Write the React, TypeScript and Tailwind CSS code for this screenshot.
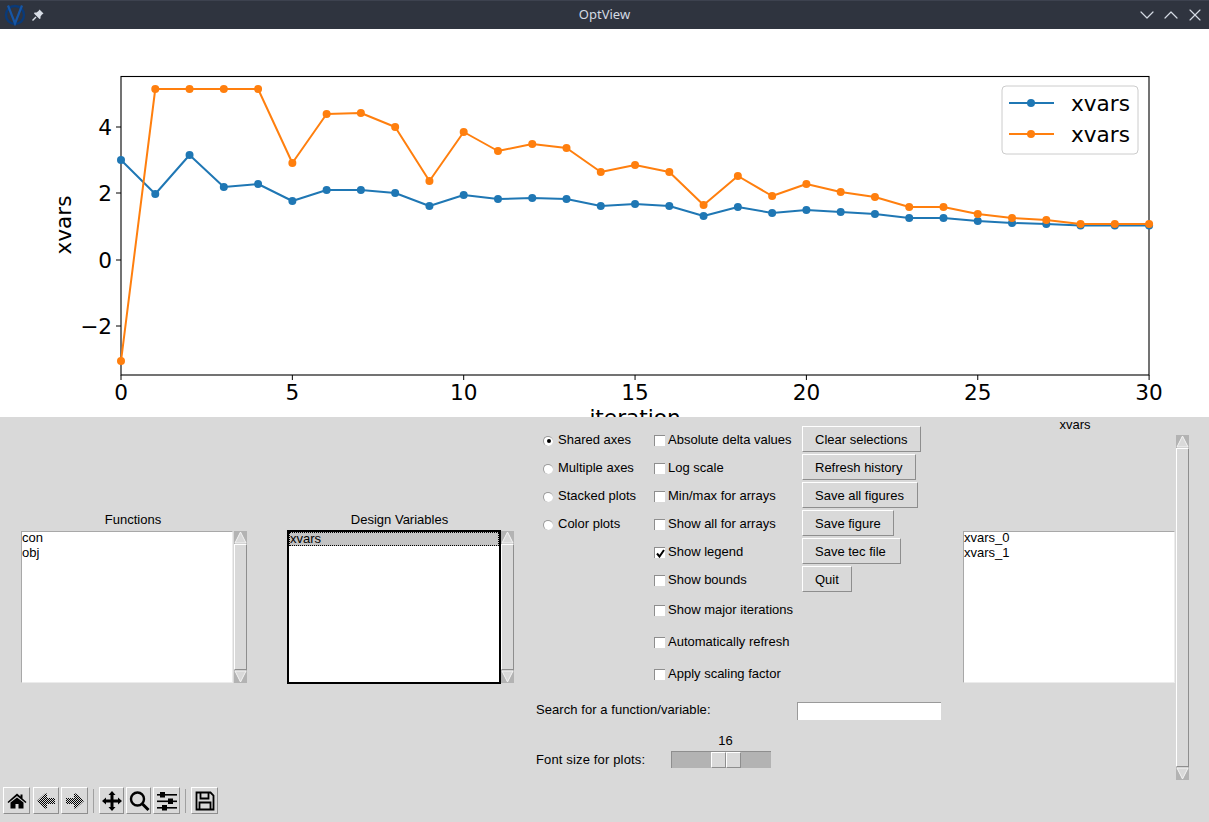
import { ChevronDown, ChevronUp, X } from "lucide-react";

const blue = [160, 194, 155, 187, 184, 201, 190, 190, 193, 206, 195, 199, 198, 199, 206, 204, 206, 216, 207, 213, 210, 212, 214, 218, 218, 221, 223, 224, 225.5, 225.5, 225.5];
const orange = [361, 89, 89, 89, 89, 163, 114, 113, 127, 181, 132, 151, 144, 148, 172, 165, 172, 205, 176, 196, 184, 192, 197, 207, 207, 214, 218, 220, 224, 224, 224];

const px = (i: number) => 121 + i * 34.27;

function Series({ ys, color }: { ys: number[]; color: string }) {
  return (
    <g>
      <polyline points={ys.map((y, i) => `${px(i)},${y}`).join(" ")} fill="none" stroke={color} strokeWidth="2" strokeLinejoin="round" />
      {ys.map((y, i) => (
        <circle key={i} cx={px(i)} cy={y} r="4" fill={color} />
      ))}
    </g>
  );
}

function Chart() {
  const xTicks = [0, 5, 10, 15, 20, 25, 30];
  const yTicks = [
    { label: "4", y: 127 },
    { label: "2", y: 193 },
    { label: "0", y: 260 },
    { label: "−2", y: 326 },
  ];
  return (
    <svg width="1209" height="388" viewBox="0 29 1209 388" className="block" fontFamily="'DejaVu Sans', sans-serif" fontSize="21.6" fill="#000">
      <rect x="121" y="76.5" width="1028" height="298.5" fill="none" stroke="#000" strokeWidth="1.1" />
      <Series ys={blue} color="#1f77b4" />
      <Series ys={orange} color="#ff7f0e" />
      {xTicks.map((t) => (
        <g key={t}>
          <line x1={px(t)} x2={px(t)} y1="375" y2="380" stroke="#000" />
          <text x={px(t)} y="400" textAnchor="middle">{t}</text>
        </g>
      ))}
      {yTicks.map((t) => (
        <g key={t.label}>
          <line x1="116" x2="121" y1={t.y} y2={t.y} stroke="#000" />
          <text x="112" y={t.y + 8} textAnchor="end">{t.label}</text>
        </g>
      ))}
      <text x="635" y="425" textAnchor="middle">iteration</text>
      <text transform="translate(71 225) rotate(-90)" textAnchor="middle">xvars</text>

      <rect x="1002" y="86" width="136" height="68" rx="4" fill="#fff" fillOpacity="0.8" stroke="#ccc" />
      <line x1="1009" x2="1054" y1="103" y2="103" stroke="#1f77b4" strokeWidth="2" />
      <circle cx="1031" cy="103" r="4" fill="#1f77b4" />
      <line x1="1009" x2="1054" y1="134" y2="134" stroke="#ff7f0e" strokeWidth="2" />
      <circle cx="1031" cy="134" r="4" fill="#ff7f0e" />
      <text x="1071" y="111">xvars</text>
      <text x="1071" y="142">xvars</text>
    </svg>
  );
}

function TitleBar() {
  return (
    <div className="flex h-[29px] items-center border-t border-[#3d424f] bg-[#2f343f] pl-1 pr-[4px] text-[#d3dae3]">
      <div className="flex flex-1 items-center">
        <svg width="22" height="22" viewBox="0 0 22 22" fill="none">
          <circle cx="11" cy="11" r="9" stroke="#0a3a78" strokeWidth="2.4" />
          <path d="M4 1.5 L11 19.5 L18 1.5" stroke="#1656a6" strokeWidth="2.2" />
        </svg>
        <svg width="14" height="14" viewBox="0 0 14 14" className="ml-[5px]" fill="#d8dde6">
          <path d="M8.5 1.5 L12.5 5.5 L11 6.5 L9.5 8.5 L9.5 10.5 L8.5 11 L3 5.5 L3.5 4.5 L5.5 4.5 L7.5 3 Z" />
          <path d="M5 9 L1.5 12.5" stroke="#d8dde6" strokeWidth="1.4" />
        </svg>
      </div>
      <div className="font-['Noto_Sans',sans-serif] text-[13px]">OptView</div>
      <div className="flex flex-1 items-center justify-end">
        <ChevronDown size={24} strokeWidth={1.2} />
        <ChevronUp size={24} strokeWidth={1.2} />
        <X size={20} strokeWidth={1.4} className="ml-[2px]" />
      </div>
    </div>
  );
}

function ScrollArrow({ up }: { up?: boolean }) {
  return (
    <svg width="13" height="13" viewBox="0 0 13 13" className="block shrink-0">
      <rect width="13" height="13" fill="#b3b3b3" />
      <path d={up ? "M6.5 1 L12 12 L1 12 Z" : "M1 1 L12 1 L6.5 12 Z"} fill="#d9d9d9" stroke="#f4f4f4" strokeWidth="1" />
    </svg>
  );
}

function ScrollBar({ className }: { className: string }) {
  return (
    <div className={`flex w-[13px] shrink-0 flex-col ${className}`}>
      <ScrollArrow up />
      <div className="flex-1 border border-r-[#8e8e8e] border-b-[#8e8e8e] border-t-white border-l-white bg-[#d9d9d9]" />
      <ScrollArrow />
    </div>
  );
}

function ListBox({ items, focused }: { items: string[]; focused?: boolean }) {
  return (
    <div className={`flex-1 bg-white ${focused ? "-mt-px h-[154px] border-2 border-black" : "h-[152px] border border-t-[#a8a8a8] border-l-[#a8a8a8] border-r-[#ececec] border-b-[#ececec]"}`}>
      {items.map((item) => (
        <div key={item} className={focused ? "h-[14px] border border-dotted border-black bg-[#c3c3c3] leading-[11px]" : "h-[15px] leading-[11px]"}>
          {item}
        </div>
      ))}
    </div>
  );
}

function Radio({ label, checked }: { label: string; checked?: boolean }) {
  return (
    <div className="flex h-[28px] items-center pl-[7px]">
      <span className="mt-[3px] flex h-[10px] w-[10px] items-center justify-center rounded-full border-t border-l border-[#9a9a9a] bg-white">
        {checked && <span className="h-[4px] w-[4px] rounded-full bg-black" />}
      </span>
      <span className="ml-[5px]">{label}</span>
    </div>
  );
}

function Check({ label, checked, h }: { label: string; checked?: boolean; h: string }) {
  return (
    <div className={`flex items-center ${h}`}>
      <span className="mt-[3px] flex h-[11px] w-[11px] shrink-0 items-center justify-center border-t border-l border-[#8e8e8e] bg-white">
        {checked && (
          <svg width="9" height="9" viewBox="0 0 9 9">
            <path d="M1 4.5 L3.5 7.5 L8 1" fill="none" stroke="#000" strokeWidth="2" />
          </svg>
        )}
      </span>
      <span className="ml-[3px] whitespace-nowrap">{label}</span>
    </div>
  );
}

function TkButton({ label, width }: { label: string; width: string }) {
  return (
    <div className="h-[28px]">
      <div className={`flex h-[26px] items-center border border-t-white border-l-white border-r-[#8e8e8e] border-b-[#8e8e8e] pl-[12px] ${width}`}>
        {label}
      </div>
    </div>
  );
}

function ToolButton({ children, className }: { children: React.ReactNode; className: string }) {
  return (
    <div className={`flex h-[27px] items-center justify-center border border-t-white border-l-white border-r-[#8e8e8e] border-b-[#8e8e8e] ${className}`}>
      {children}
    </div>
  );
}

function Toolbar() {
  return (
    <div className="flex items-center pl-[3px]">
      <ToolButton className="w-[27px]">
        <svg width="20" height="20" viewBox="0 0 20 20">
          <path d="M10 2.5 L13.5 5.5 V3.5 H15.5 V7.5 L19.5 11 L18.5 12 L10 5 L1.5 12 L0.5 11 Z" fill="#000" />
          <path d="M3.5 11.5 L10 6.5 L16.5 11.5 V17.5 H11.5 V13 H8.5 V17.5 H3.5 Z" fill="#000" />
        </svg>
      </ToolButton>
      <ToolButton className="ml-[3px] w-[26px]">
        <svg width="20" height="20" viewBox="0 0 20 20">
          <defs>
            <pattern id="dither" width="2" height="2" patternUnits="userSpaceOnUse">
              <rect width="2" height="2" fill="#d9d9d9" />
              <rect width="1" height="1" fill="#000" />
              <rect x="1" y="1" width="1" height="1" fill="#000" />
            </pattern>
          </defs>
          <path d="M1 10 L9 2.5 L11 2.5 L11 7 L19 7 L19 13 L11 13 L11 17.5 L9 17.5 Z" fill="url(#dither)" />
        </svg>
      </ToolButton>
      <ToolButton className="ml-[2px] w-[27px]">
        <svg width="20" height="20" viewBox="0 0 20 20">
          <path d="M19 10 L11 2.5 L9 2.5 L9 7 L1 7 L1 13 L9 13 L9 17.5 L11 17.5 Z" fill="url(#dither)" />
        </svg>
      </ToolButton>
      <div className="ml-[5px] h-[24px] w-px bg-[#a0a0a0]" />
      <ToolButton className="ml-[5px] w-[25px]">
        <svg width="22" height="22" viewBox="0 0 22 22">
          <path d="M11 1 L14.5 5 H12.5 V9.5 H17 V7.5 L21 11 L17 14.5 V12.5 H12.5 V17 H14.5 L11 21 L7.5 17 H9.5 V12.5 H5 V14.5 L1 11 L5 7.5 V9.5 H9.5 V5 H7.5 Z" fill="#000" />
        </svg>
      </ToolButton>
      <ToolButton className="ml-[2px] w-[25px]">
        <svg width="22" height="22" viewBox="0 0 22 22" fill="none" stroke="#000">
          <circle cx="9.5" cy="9" r="6.5" strokeWidth="2.4" />
          <path d="M14.5 14 L20.5 20" strokeWidth="3" />
        </svg>
      </ToolButton>
      <ToolButton className="ml-[2px] w-[27px]">
        <svg width="20" height="20" viewBox="0 0 20 20" fill="#000">
          <rect x="0" y="3" width="20" height="1.6" />
          <rect x="3" y="1" width="5" height="5.5" />
          <rect x="0" y="9.5" width="20" height="1.6" />
          <rect x="11" y="7.5" width="5" height="5.5" />
          <rect x="0" y="16" width="20" height="1.6" />
          <rect x="5" y="14" width="5" height="5.5" />
        </svg>
      </ToolButton>
      <div className="ml-[5px] h-[24px] w-px bg-[#a0a0a0]" />
      <ToolButton className="ml-[5px] w-[27px]">
        <svg width="20" height="20" viewBox="0 0 20 20" fill="none" stroke="#000" strokeWidth="1.8">
          <path d="M1.5 1.5 H15.5 L18.5 4.5 V18.5 H1.5 Z" />
          <path d="M5.5 1.5 V7.5 H13.5 V1.5" />
          <path d="M4.5 18.5 V11.5 H15.5 V18.5" />
        </svg>
      </ToolButton>
    </div>
  );
}

export default function App() {
  return (
    <div className="flex h-[822px] w-[1209px] flex-col overflow-hidden bg-white font-['Liberation_Sans',Arial,sans-serif] text-[13px] text-black">
      <TitleBar />
      <div className="h-[388px] overflow-hidden">
        <Chart />
      </div>
      <div className="flex h-[405px] flex-col bg-[#d9d9d9]">
        <div className="flex h-[370px] items-start leading-[15px]">
          <div className="ml-[21px] mt-[95px] w-[226px] shrink-0">
            <div className="h-[19px] pr-[2px] text-center">Functions</div>
            <div className="flex gap-px">
              <ListBox items={["con", "obj"]} />
              <ScrollBar className="h-[152px]" />
            </div>
          </div>
          <div className="ml-[40px] mt-[95px] w-[227px] shrink-0">
            <div className="h-[19px] pr-[2px] text-center">Design Variables</div>
            <div className="flex">
              <ListBox items={["xvars"]} focused />
              <ScrollBar className="h-[152px]" />
            </div>
          </div>

          <div className="ml-[22px] mt-[8px] w-[405px]">
            <div className="flex">
              <div className="w-[118px]">
                <Radio label="Shared axes" checked />
                <Radio label="Multiple axes" />
                <Radio label="Stacked plots" />
                <Radio label="Color plots" />
              </div>
              <div className="w-[148px]">
                <Check label="Absolute delta values" h="h-[28px]" />
                <Check label="Log scale" h="h-[28px]" />
                <Check label="Min/max for arrays" h="h-[28px]" />
                <Check label="Show all for arrays" h="h-[28px]" />
                <Check label="Show legend" checked h="h-[28px]" />
                <Check label="Show bounds" h="h-[28px]" />
                <Check label="Show major iterations" h="h-[32px]" />
                <Check label="Automatically refresh" h="h-[32px]" />
                <Check label="Apply scaling factor" h="h-[32px]" />
              </div>
              <div className="mt-[1px]">
                <TkButton label="Clear selections" width="w-[119px]" />
                <TkButton label="Refresh history" width="w-[114px]" />
                <TkButton label="Save all figures" width="w-[116px]" />
                <TkButton label="Save figure" width="w-[92px]" />
                <TkButton label="Save tec file" width="w-[99px]" />
                <TkButton label="Quit" width="w-[50px]" />
              </div>
            </div>
            <div className="mt-[13px] flex items-start">
              <span className="w-[261px] tracking-[0.06px]">Search for a function/variable:</span>
              <div className="h-[18px] w-[144px] border-t border-l border-[#9a9a9a] bg-white" />
            </div>
            <div className="mt-[13px] flex">
              <span className="mt-[19px] w-[135px] tracking-[0.15px]">Font size for plots:</span>
              <div className="w-[100px]">
                <div className="h-[18px] pl-[9px] text-center leading-[15px]">16</div>
                <div className="h-[17px] border-t border-l border-[#8e8e8e] border-r-white border-b-white bg-[#b3b3b3] pl-[39px]">
                  <div className="flex h-full w-[30px]">
                    <div className="flex-1 border border-t-white border-l-white border-r-[#8e8e8e] border-b-[#8e8e8e] bg-[#d9d9d9]" />
                    <div className="flex-1 border border-t-white border-l-white border-r-[#8e8e8e] border-b-[#8e8e8e] bg-[#d9d9d9]" />
                  </div>
                </div>
              </div>
            </div>
          </div>

          <div className="ml-[22px] flex">
            <div className="w-[212px]">
              <div className="h-[114px] pl-[12px] text-center">xvars</div>
              <ListBox items={["xvars_0", "xvars_1"]} />
            </div>
            <ScrollBar className="ml-[1px] mt-[18px] h-[345px]" />
          </div>
        </div>
        <Toolbar />
      </div>
    </div>
  );
}
